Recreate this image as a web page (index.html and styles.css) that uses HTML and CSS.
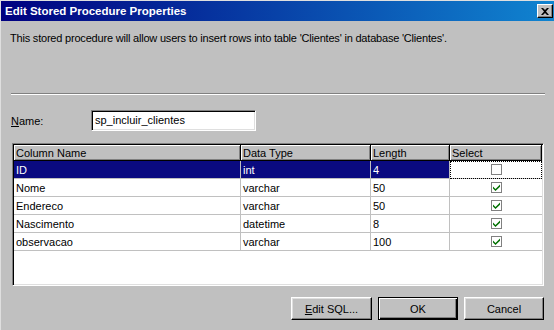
FILE: index.html
```html
<html>
  <head>
    <title>Edit Stored Procedure Properties</title>
    <link rel="stylesheet" href="styles.css">
  </head>
  <body>
    <div class="window">
      <div class="titlebar">
        <span class="title">Edit Stored Procedure Properties</span>
        <span class="close">
          <svg width="8" height="7" viewBox="0 0 8 7">
            <path d="M0 0h2l2 2 2-2h2L5 3.5 8 7H6L4 5 2 7H0l3-3.5z" fill="#000"/>
          </svg>
        </span>
      </div>
      <div class="content">
        <p class="intro">This stored procedure will allow users to insert rows into table 'Clientes' in database 'Clientes'.</p>
        <div class="separator"></div>
        <div class="name-row">
          <label class="name-label"><u>N</u>ame:</label>
          <div class="textbox">sp_incluir_clientes</div>
        </div>
        <div class="grid">
          <table>
            <colgroup>
              <col class="col-name">
              <col class="col-type">
              <col class="col-length">
              <col class="col-select">
            </colgroup>
            <tr>
              <th>Column Name</th>
              <th>Data Type</th>
              <th>Length</th>
              <th>Select</th>
            </tr>
            <tr class="selected">
              <td>ID</td>
              <td>int</td>
              <td>4</td>
              <td class="check focus"><span class="checkbox"></span></td>
            </tr>
            <tr>
              <td>Nome</td>
              <td>varchar</td>
              <td>50</td>
              <td class="check"><span class="checkbox checked"><svg width="7" height="7" viewBox="0 0 7 7"><path d="M0 2.5l2.5 2.5L7 0.5v2.2L2.5 7 0 4.5z" fill="#007000"/></svg></span></td>
            </tr>
            <tr>
              <td>Endereco</td>
              <td>varchar</td>
              <td>50</td>
              <td class="check"><span class="checkbox checked"><svg width="7" height="7" viewBox="0 0 7 7"><path d="M0 2.5l2.5 2.5L7 0.5v2.2L2.5 7 0 4.5z" fill="#007000"/></svg></span></td>
            </tr>
            <tr>
              <td>Nascimento</td>
              <td>datetime</td>
              <td>8</td>
              <td class="check"><span class="checkbox checked"><svg width="7" height="7" viewBox="0 0 7 7"><path d="M0 2.5l2.5 2.5L7 0.5v2.2L2.5 7 0 4.5z" fill="#007000"/></svg></span></td>
            </tr>
            <tr>
              <td>observacao</td>
              <td>varchar</td>
              <td>100</td>
              <td class="check"><span class="checkbox checked"><svg width="7" height="7" viewBox="0 0 7 7"><path d="M0 2.5l2.5 2.5L7 0.5v2.2L2.5 7 0 4.5z" fill="#007000"/></svg></span></td>
            </tr>
          </table>
        </div>
        <div class="buttons">
          <button class="button edit-sql"><u>E</u>dit SQL...</button>
          <button class="button default">OK</button>
          <button class="button">Cancel</button>
        </div>
      </div>
    </div>
  </body>
</html>
```

FILE: styles.css
```css
body {
  margin: 0;
  background: #c0c0c0;
  font-family: "Liberation Sans", Arial, sans-serif;
  font-size: 11px;
  color: #000;
}
.window {
  width: 553px;
  height: 329px;
  border-top: 1px solid #dfdfdf;
  border-left: 1px solid #dfdfdf;
  background: #c0c0c0;
}
.titlebar {
  height: 20px;
  display: flex;
  align-items: center;
  justify-content: space-between;
  padding: 0 1px 0 4px;
  background: linear-gradient(to right, #000080, #1084d0);
}
.title {
  color: #fff;
  font-weight: bold;
  font-size: 11.5px;
}
.close {
  width: 16px;
  height: 14px;
  box-sizing: border-box;
  display: flex;
  align-items: center;
  justify-content: center;
  background: #c0c0c0;
  border-top: 1px solid #fff;
  border-left: 1px solid #fff;
  border-right: 1px solid #000;
  border-bottom: 1px solid #000;
  box-shadow: inset -1px -1px #808080;
}
.content {
  padding: 10px 9px 0 9px;
}
.intro {
  margin: 0;
  line-height: 14px;
  letter-spacing: -0.2px;
}
.separator {
  margin-top: 48px;
  margin-left: 1px;
  height: 0;
  border-top: 1px solid #808080;
  border-bottom: 1px solid #fff;
}
.name-row {
  display: flex;
  align-items: center;
  margin-top: 15px;
  height: 21px;
}
.name-label {
  width: 80px;
  padding-left: 1px;
}
.textbox {
  width: 165px;
  height: 21px;
  box-sizing: border-box;
  padding: 3px 3px 0 3px;
  background: #fff;
  border-top: 1px solid #808080;
  border-left: 1px solid #808080;
  border-right: 1px solid #fff;
  border-bottom: 1px solid #fff;
  box-shadow: inset 1px 1px #000, inset -1px -1px #dfdfdf;
}
.grid {
  margin-top: 12px;
  margin-left: 2px;
  width: 532px;
  height: 143px;
  box-sizing: border-box;
  background: #fff;
  border-top: 1px solid #808080;
  border-left: 1px solid #808080;
  border-right: 1px solid #fff;
  border-bottom: 1px solid #fff;
  box-shadow: inset 1px 1px #000, inset -1px -1px #dfdfdf;
  padding: 1px;
}
.grid table {
  border-collapse: separate;
  border-spacing: 0;
  table-layout: fixed;
  width: 528px;
  font-size: 11px;
}
.col-name { width: 227px; }
.col-type { width: 130px; }
.col-length { width: 79px; }
.col-select { width: 92px; }
.grid th {
  height: 16px;
  box-sizing: border-box;
  padding: 0 0 0 2px;
  text-align: left;
  font-weight: normal;
  background: #c0c0c0;
  border-right: 1px solid #000;
  border-bottom: 1px solid #000;
  box-shadow: inset 1px 1px #fff, inset -1px -1px #808080;
  white-space: nowrap;
  overflow: hidden;
}
.grid td {
  height: 18px;
  box-sizing: border-box;
  padding: 0 0 0 2px;
  border-right: 1px solid #c0c0c0;
  border-bottom: 1px solid #c0c0c0;
  white-space: nowrap;
}
.grid td:last-child {
  border-right: none;
}
.selected td {
  background: #0a0a80;
  color: #fff;
}
.selected td.check {
  background: #fff;
  outline: 1px dotted #000;
  outline-offset: -1px;
}
.check {
  text-align: center;
}
.grid td.check {
  padding: 0;
}
.checkbox {
  display: inline-flex;
  align-items: center;
  justify-content: center;
  vertical-align: middle;
  width: 11px;
  height: 11px;
  box-sizing: border-box;
  border: 1px solid #808080;
  background: #fff;
}
.buttons {
  display: flex;
  justify-content: flex-end;
  gap: 6px;
  margin-top: 11px;
  margin-right: 1px;
}
.button {
  width: 80px;
  height: 23px;
  box-sizing: border-box;
  font-family: "Liberation Sans", Arial, sans-serif;
  font-size: 11px;
  color: #000;
  background: #c0c0c0;
  border-top: 1px solid #fff;
  border-left: 1px solid #fff;
  border-right: 1px solid #000;
  border-bottom: 1px solid #000;
  box-shadow: inset -1px -1px #808080, inset 1px 1px #dfdfdf;
  padding: 0;
}
.edit-sql {
  width: 81px;
}
.button.default {
  border: 1px solid #000;
  box-shadow: inset 1px 1px #fff, inset -1px -1px #000, inset -2px -2px #808080;
}
```
